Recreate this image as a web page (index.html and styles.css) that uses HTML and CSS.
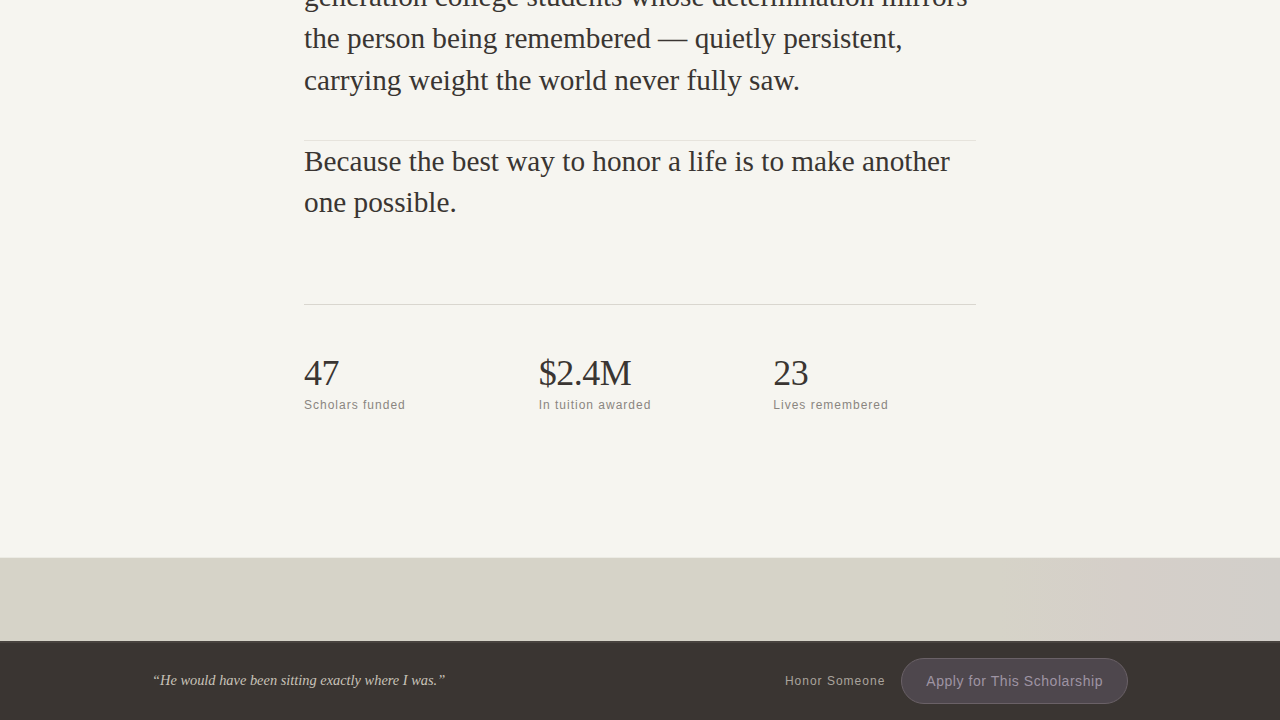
FILE: index.html
```html
<!DOCTYPE html>
<html lang="en">
<head>
    <meta charset="UTF-8">
    <meta name="viewport" content="width=device-width, initial-scale=1.0">
    <title>Scholarship in Memory</title>
    <link rel="stylesheet" href="styles.css">
</head>
<body>
    <main class="story">
        <p class="lead">
            Each year, the fund supports first-<br>generation college students whose determination mirrors
            the person being remembered — quietly persistent,
            carrying weight the world never fully saw.
        </p>
        <p class="closing">
            Because the best way to honor a life is to make another one possible.
        </p>

        <section class="stats">
            <div class="stat">
                <div class="stat-num">47</div>
                <div class="stat-label">Scholars funded</div>
            </div>
            <div class="stat">
                <div class="stat-num">$2.4M</div>
                <div class="stat-label">In tuition awarded</div>
            </div>
            <div class="stat">
                <div class="stat-num">23</div>
                <div class="stat-label">Lives remembered</div>
            </div>
        </section>
    </main>

    <section class="band"></section>

    <footer class="bar">
        <div class="bar-inner">
            <p class="bar-quote">“He would have been sitting exactly where I was.”</p>
            <div class="bar-actions">
                <a href="#" class="link-honor">Honor Someone</a>
                <a href="#" class="btn-apply">Apply for This Scholarship</a>
            </div>
        </div>
    </footer>
</body>
</html>
```

FILE: styles.css
```css
* {
    box-sizing: border-box;
}

body {
    margin: 0;
    background-color: #f6f5f0;
    color: #3a3532;
    font-family: "Liberation Serif", "Times New Roman", serif;
}

.story {
    max-width: 672px;
    margin: 0 auto;
}

.lead {
    margin: -67px 0 39px 0;
    font-size: 29.25px;
    line-height: 42px;
}

.closing {
    margin: 0;
    border-top: 1px solid #e6e3dc;
    font-size: 29.25px;
    line-height: 41px;
}

.stats {
    display: grid;
    grid-template-columns: repeat(3, 1fr);
    gap: 32px;
    margin-top: 81px;
    padding: 48px 0 144px 0;
    border-top: 1px solid #d9d6cf;
}

.stat-num {
    font-size: 36px;
    line-height: 40px;
    letter-spacing: -0.5px;
    color: #3a3532;
}

.stat-label {
    margin-top: 4px;
    font-family: "Liberation Sans", Arial, sans-serif;
    font-size: 12px;
    line-height: 16px;
    letter-spacing: 1px;
    color: #8a8580;
}

.band {
    height: 240px;
    border-top: 1px solid #ecebe4;
    background: linear-gradient(90deg, #d6d3c8 0%, #d6d3c8 78%, #d5cfc9 88%, #d2cfca 100%);
}

.bar {
    position: fixed;
    left: 0;
    right: 0;
    bottom: 0;
    height: 79px;
    background-color: #3a3532;
    border-top: 2px solid #48433f;
}

.bar-inner {
    max-width: 976px;
    height: 100%;
    margin: 0 auto;
    display: flex;
    align-items: center;
    justify-content: space-between;
    padding-bottom: 2px;
}

.bar-quote {
    margin: 0;
    font-style: italic;
    font-size: 14.4px;
    color: #c9c3b9;
}

.bar-actions {
    display: flex;
    align-items: center;
    gap: 16px;
}

.link-honor {
    font-family: "Liberation Sans", Arial, sans-serif;
    font-size: 12px;
    letter-spacing: 1px;
    color: #aaa49d;
    text-decoration: none;
}

.btn-apply {
    display: inline-block;
    padding: 14px 24px;
    border-radius: 999px;
    border: 1px solid #6a6167;
    background-color: #4e474d;
    font-family: "Liberation Sans", Arial, sans-serif;
    font-size: 14px;
    line-height: 16px;
    letter-spacing: 0.55px;
    color: #9e94a3;
    text-decoration: none;
}
```
